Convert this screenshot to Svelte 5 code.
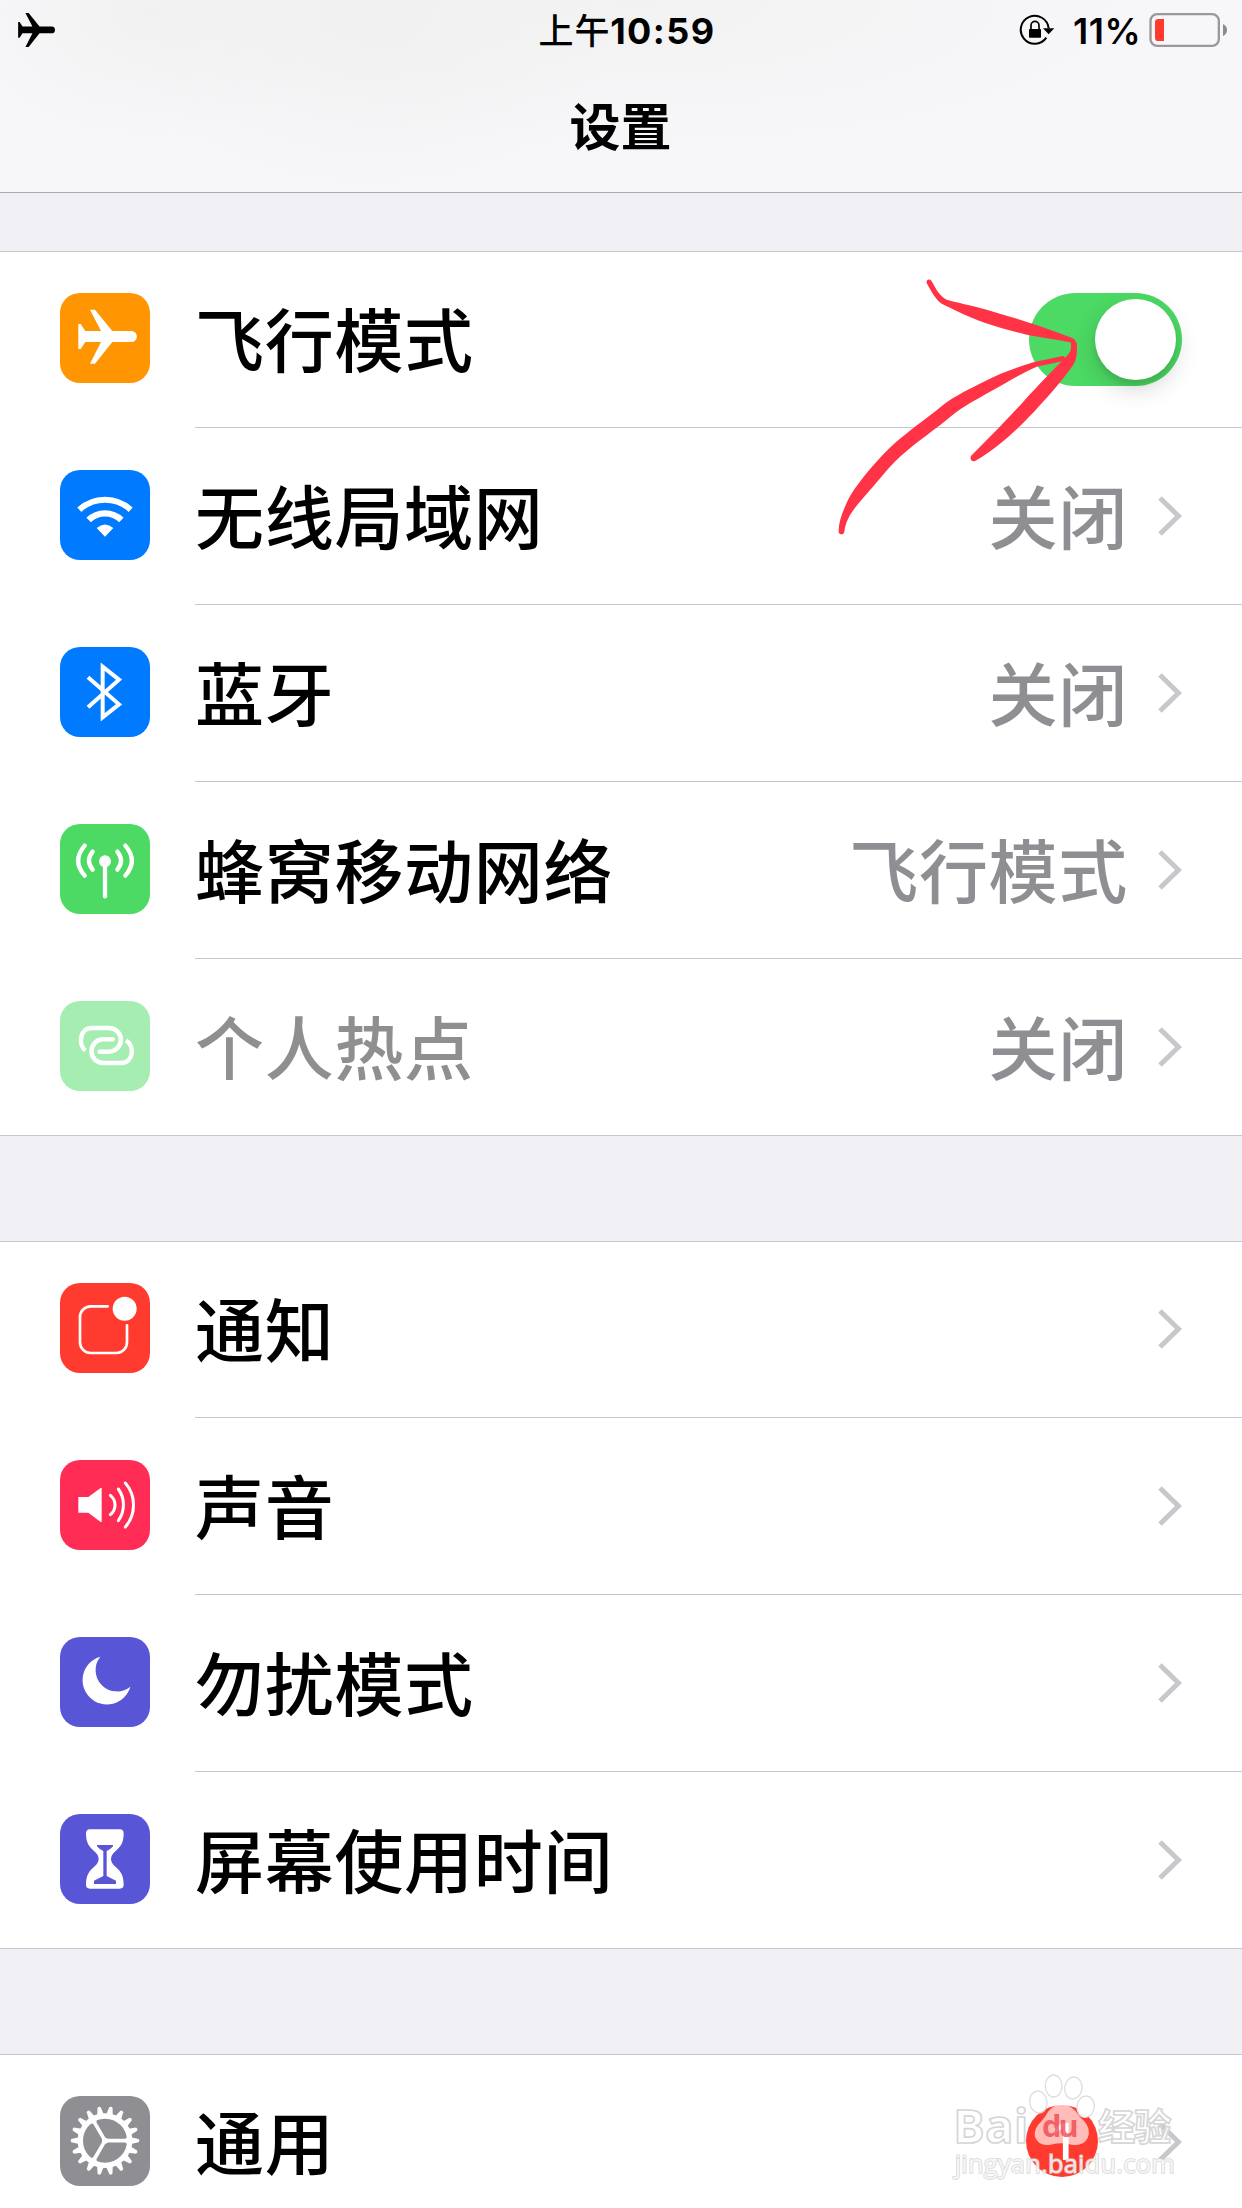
<script>
  const groups = [
    [
      { icon: 'plane', color: '#ff9500', label: '飞行模式', toggle: true },
      { icon: 'wifi', color: '#007aff', label: '无线局域网', value: '关闭' },
      { icon: 'bluetooth', color: '#007aff', label: '蓝牙', value: '关闭' },
      { icon: 'cellular', color: '#4cd964', label: '蜂窝移动网络', value: '飞行模式' },
      { icon: 'hotspot', color: '#a5edb1', label: '个人热点', value: '关闭', disabled: true },
    ],
    [
      { icon: 'notice', color: '#ff3b30', label: '通知' },
      { icon: 'sound', color: '#ff2d55', label: '声音' },
      { icon: 'moon', color: '#5856d6', label: '勿扰模式' },
      { icon: 'hourglass', color: '#5856d6', label: '屏幕使用时间' },
    ],
    [{ icon: 'gear', color: '#8e8e93', label: '通用', badge: '1' }],
  ];
  const teeth = Array.from({ length: 18 }, (_, i) => i * 20);
  const planePath =
    'M55 93H62L76 114H123L90 50H105L157 114H214A16.5 16.5 0 0 1 214 147H157L105 212H90L123 147H76L62 168H55Z';
</script>

{#snippet glyph(name, color)}
  <svg class="glyph" viewBox="0 0 270 270">
    {#if name === 'plane'}
      <path class="solid" d={planePath} />
    {:else if name === 'wifi'}
      <path class="line" stroke-width="18" d="M58 119A114 114 0 0 1 212 119" />
      <path class="line" stroke-width="19" d="M86 150A70 70 0 0 1 184 150" />
      <path class="solid" d="M135 200L110 174Q135 153 160 174Z" />
    {:else if name === 'bluetooth'}
      <path class="line" stroke-width="12" d="M84 91L177 172L128 211V59L177 98L84 181" />
    {:else if name === 'cellular'}
      <circle class="solid" cx="135" cy="112" r="18" />
      <g class="line round" stroke-width="13">
        <path d="M135 112V217" />
        <path d="M98 83Q76 110 98 137M172 83Q194 110 172 137" />
        <path d="M74 65Q35 110 74 155M196 65Q235 110 196 155" />
      </g>
    {:else if name === 'hotspot'}
      <g class="line" stroke-width="13.5">
        <path d="M76 149C54 130 59 81 95 81H147A35.500 35.500 0 0 1 147 152H118" />
        <path d="M159 115H130A35 35 0 0 0 130 186H183C220 186 226 136 198 118" />
      </g>
      <g class="solid">
        <circle cx="119" cy="152" r="6.700" />
        <circle cx="158" cy="115" r="6.700" />
      </g>
    {:else if name === 'notice'}
      <path
        class="line round"
        stroke-width="8"
        d="M143 70H92A32 32 0 0 0 60 102V178A32 32 0 0 0 92 210H169A32 32 0 0 0 201 178V127"
      />
      <circle class="solid" cx="194" cy="77" r="36" />
    {:else if name === 'sound'}
      <path class="solid" d="M55 111H85L122 84H125V186H122L85 158H55Z" />
      <g class="line round" stroke-width="9">
        <path d="M151 106A37 37 0 0 1 151 164" />
        <path d="M175 87A81 81 0 0 1 175 182" />
        <path d="M196 69A101 101 0 0 1 196 201" />
      </g>
    {:else if name === 'moon'}
      <path class="solid" d="M121 59A73 73 0 1 0 211 149A64 64 0 0 1 121 59Z" />
    {:else if name === 'hourglass'}
      <path
        class="solid"
        d="M90 46H179Q192 46 191 60C190 88 182 97 168 110Q153 122 153 135Q153 148 168 160C182 173 190 182 191 210Q192 224 179 224H90Q77 224 78 210C79 182 87 173 101 160Q116 148 116 135Q116 122 101 110C87 97 79 88 78 60Q77 46 90 46Z"
      />
      <path
        fill={color}
        d="M111 93H159V97Q151 107 140 111V186L168 200V210H102V200L130 186V111Q118 106 111 97Z"
      />
    {:else if name === 'gear'}
      {#each teeth as angle}
        <path class="solid" d="M213 124L236 129Q241 134 236 139L213 144Z" transform="rotate({angle} 135 134)" />
      {/each}
      <circle class="line" cx="135" cy="134" r="74" stroke-width="16" />
      {#each [0, 120, 240] as angle}
        <path
          class="solid"
          d="M135 128.500H196L206 120V148L196 139.500H135Z"
          transform="rotate({angle} 135 134)"
        />
      {/each}
      <circle class="solid" cx="135" cy="134" r="9" />
    {/if}
  </svg>
{/snippet}

<div class="screen">
  <header>
    <div class="status">
      <div class="side">
        <svg class="status-plane" viewBox="55 50 175 162"><path d={planePath} /></svg>
      </div>
      <div class="time"><span class="cjk">上午</span><span>10:59</span></div>
      <div class="side end">
        <svg class="lock" viewBox="354 40 108 100">
          <path class="ring" d="M443 86A42 42 0 1 0 436 114" />
          <path d="M426 86H460L443 104ZM386 88H418Q420 88 420 90V112Q420 114 418 114H386Q384 114 384 112V90Q384 88 386 88Z" />
          <path class="shackle" d="M390 90V77A12 12 0 0 1 414 77V90" />
        </svg>
        <span class="percent">11%</span>
        <svg class="battery" viewBox="747 39 236 102">
          <rect class="shell" x="751.500" y="42.500" width="205" height="95" rx="20" />
          <path class="nub" d="M969 72Q981 78 981 90Q981 102 969 108Z" />
          <path class="charge" d="M792 57H775Q765 57 765 67V113Q765 123 775 123H792Z" />
        </svg>
      </div>
    </div>
    <h1>设置</h1>
  </header>

  <main>
    {#each groups as rows}
      <section>
        {#each rows as row}
          <div class="row">
            <div class="tile" style="background: {row.color}">{@render glyph(row.icon, row.color)}</div>
            <div class="body">
              <span class="label" class:disabled={row.disabled}>{row.label}</span>
              {#if row.toggle}
                <span class="toggle"><i class="knob"></i></span>
              {:else}
                {#if row.value}<span class="value">{row.value}</span>{/if}
                {#if row.badge}<span class="badge">{row.badge}</span>{/if}
                <svg class="chevron" viewBox="0 0 24 40"><path d="M2 2L20.500 20L2 38" /></svg>
              {/if}
            </div>
          </div>
        {/each}
      </section>
    {/each}
  </main>

  <svg class="arrow" viewBox="0 0 1266 900">
    <path
      d="M320 69C317 58 330 54 335 64C348 87 360 110 380 119C405 127 450 134 520 155C600 178 680 204 755 233Q770 240 771 255C771 285 770 300 757 319C735 350 690 405 645 452C600 500 540 560 465 603C454 606 449 597 453 588C500 540 560 480 610 425C655 375 710 320 745 283C754 272 754 262 752 247C715 239 665 233 620 224C540 205 470 183 410 153C385 140 364 134 353 121C338 103 330 88 320 69Z"
    />
    <path
      d="M728 288C738 291 737 302 727 304L650 320C600 342 560 368 510 395C470 418 430 438 395 467C350 505 290 545 240 590C200 627 165 675 130 713C100 748 78 775 73 815C71 826 57 825 56 815C55 785 70 750 85 718C105 680 150 625 190 583C240 528 310 485 370 434C405 407 450 387 490 366C540 340 590 322 640 307Z"
    />
  </svg>

  <svg class="watermark" viewBox="0 0 966 504">
    <g class="paw">
      <ellipse cx="401" cy="138" rx="25" ry="33" />
      <ellipse cx="460" cy="144" rx="26" ry="33" transform="rotate(8 460 144)" />
      <ellipse cx="355" cy="186" rx="26" ry="33" transform="rotate(-8 355 186)" />
      <ellipse cx="497" cy="200" rx="26" ry="32" transform="rotate(8 497 200)" />
    </g>
    <path
      class="pad"
      d="M385 214Q425 170 467 214Q478 232 493 244Q514 268 503 294Q490 320 455 314Q425 306 392 314Q355 319 345 291Q340 266 363 245Q376 232 385 214Z"
    />
    <text class="mark" x="100" y="309" textLength="225">Bai</text>
    <text class="mark cn" x="534" y="302" textLength="220">经验</text>
    <text class="du" x="366" y="292" textLength="110">du</text>
    <text class="url" x="104" y="400" textLength="660">jingyan.baidu.com</text>
  </svg>
</div>

<style>
  :global(body) {
    margin: 0;
    background: #efeff4;
  }
  .screen {
    position: relative;
    width: 1242px;
    height: 2208px;
    overflow: hidden;
    background: #efeff4;
    color: #000;
    font-family: 'Noto Sans CJK SC', sans-serif;
    font-weight: 500;
  }
  svg {
    display: block;
    flex: none;
  }
  header {
    box-sizing: border-box;
    height: 193px;
    border-bottom: 1px solid #a9a9ae;
    background:
      radial-gradient(ellipse 260px 180px at 370px 10px, #f0f0f1, transparent),
      radial-gradient(ellipse 190px 130px at 150px 10px, #f1f1f2, transparent),
      radial-gradient(ellipse 500px 150px at 640px 0, #f2f2f3, transparent),
      #f7f7f9;
  }
  .status {
    display: flex;
    align-items: center;
    height: 60px;
    padding: 0 14px 0 18px;
  }
  .side {
    display: flex;
    flex: 1 1 0;
    align-items: center;
  }
  .end {
    justify-content: flex-end;
  }
  .status-plane {
    width: 37px;
    height: 34px;
  }
  .time {
    display: flex;
    align-items: center;
    height: 60px;
    padding: 2px 0 0 8px;
    font: 700 36px/60px Inter, sans-serif;
    letter-spacing: 1.4px;
  }
  .cjk {
    padding-bottom: 4px;
    font: 500 35px/56px 'Noto Sans CJK SC', sans-serif;
    letter-spacing: 0.8px;
  }
  .lock {
    width: 36px;
    height: 33.300px;
    margin-right: 18px;
  }
  .ring {
    fill: none;
    stroke: #000;
    stroke-width: 6;
  }
  .shackle {
    fill: none;
    stroke: #000;
    stroke-width: 5;
  }
  .percent {
    padding-top: 2px;
    font: 600 36px/58px Inter, sans-serif;
    letter-spacing: 0.6px;
    margin-right: 8px;
  }
  .battery {
    width: 78.700px;
    height: 34px;
  }
  .shell {
    fill: none;
    stroke: #999;
    stroke-width: 7;
  }
  .nub {
    fill: #8c8c8c;
  }
  .charge {
    fill: #ff3b30;
  }
  h1 {
    margin: 0;
    padding-top: 26px;
    padding-right: 1px;
    font-size: 51px;
    line-height: 76px;
    font-weight: 700;
    text-align: center;
  }
  main {
    display: flex;
    flex-direction: column;
    gap: 105px;
    padding-top: 58px;
  }
  section {
    background: #fff;
    box-shadow:
      inset 0 1px #c8c7cc,
      inset 0 -1px #c8c7cc;
  }
  .row {
    display: flex;
    height: 177px;
    padding-left: 60px;
  }
  .tile {
    flex: none;
    width: 90px;
    height: 90px;
    margin: 42px 45px 0 0;
    border-radius: 20px;
  }
  .glyph {
    width: 90px;
    height: 90px;
  }
  .solid {
    fill: #fff;
  }
  .line {
    fill: none;
    stroke: #fff;
  }
  .round {
    stroke-linecap: round;
  }
  .body {
    display: flex;
    flex: 1;
    align-items: center;
    box-sizing: border-box;
    padding-right: 60px;
    border-bottom: 1px solid #c8c7cc;
  }
  .label {
    flex: 1;
    padding-bottom: 5px;
    font-size: 69px;
    line-height: 100px;
    letter-spacing: 0.7px;
    white-space: nowrap;
  }
  .disabled {
    color: #8f8f8f;
  }
  .value {
    margin-right: 30px;
    padding-bottom: 5px;
    color: #8e8e93;
    font-size: 69px;
    line-height: 100px;
    letter-spacing: 0.7px;
    white-space: nowrap;
  }
  .chevron {
    width: 24px;
    height: 40px;
  }
  .chevron path {
    fill: none;
    stroke: #c7c7cc;
    stroke-width: 5;
  }
  .toggle {
    display: flex;
    justify-content: flex-end;
    box-sizing: border-box;
    width: 153px;
    height: 93px;
    padding: 6px;
    border-radius: 47px;
    background: #4cd964;
  }
  .knob {
    width: 81px;
    height: 81px;
    border-radius: 50%;
    background: #fff;
    box-shadow:
      0 9px 24px rgba(0, 0, 0, 0.16),
      0 5px 5px rgba(0, 0, 0, 0.08);
  }
  .badge {
    width: 72px;
    height: 72px;
    margin: 0 60px 3px 0;
    border-radius: 50%;
    background: #ff3b30;
    color: #fff;
    font: 500 51px/74px Inter, sans-serif;
    text-align: center;
  }
  .arrow {
    position: absolute;
    left: 820px;
    top: 260px;
    width: 422px;
    height: 300px;
    fill: #ff3345;
  }
  .watermark {
    position: absolute;
    left: 920px;
    top: 2040px;
    width: 322px;
    height: 168px;
  }
  .paw {
    fill: #fff;
    stroke: #dedede;
    stroke-width: 4;
  }
  .pad {
    fill: rgba(255, 255, 255, 0.66);
  }
  .mark {
    fill: #fff;
    fill-opacity: 0.75;
    stroke: #d6d6d6;
    stroke-width: 5;
    font: 700 140px 'Open Sans', sans-serif;
  }
  .cn {
    font: 700 112px 'Noto Sans CJK SC', sans-serif;
  }
  .du {
    fill: #f0404a;
    fill-opacity: 0.75;
    font: 700 92px 'Open Sans', sans-serif;
  }
  .url {
    fill: #fff;
    fill-opacity: 0.75;
    stroke: #d0d0d0;
    stroke-opacity: 0.8;
    stroke-width: 5;
    paint-order: stroke;
    font: 400 76px 'Open Sans', sans-serif;
  }
</style>
